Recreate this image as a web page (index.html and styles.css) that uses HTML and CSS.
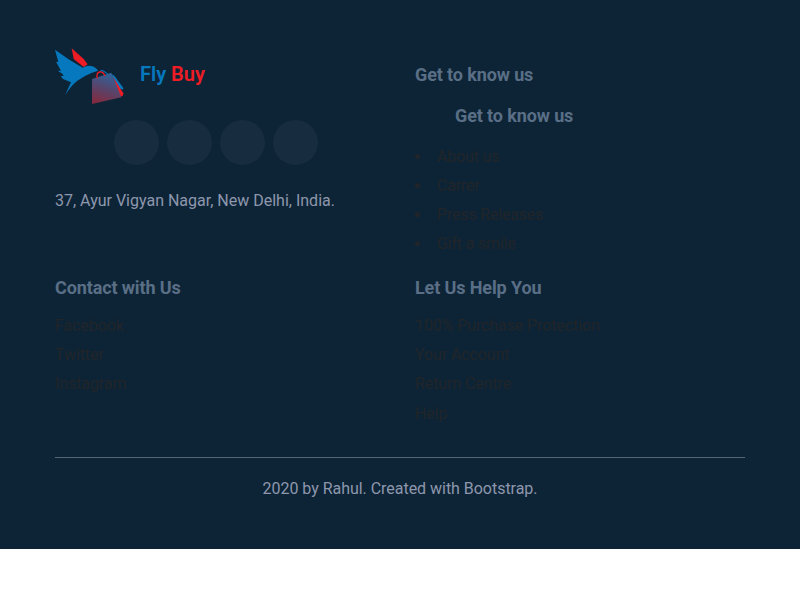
FILE: index.html
```html
<!DOCTYPE html>
<html lang="en">
<head>
<meta charset="utf-8">
<title>Fly Buy</title>
<link rel="stylesheet" href="styles.css">
</head>
<body>
<footer class="footer">
  <div class="columns">
    <section class="about">
      <a class="brand">
        <svg class="logo" viewBox="15 24 210 171">
          <defs>
            <linearGradient id="bag" x1="0.65" y1="0" x2="0.35" y2="1">
              <stop offset="0" stop-color="#2a67a0"/>
              <stop offset="0.5" stop-color="#55466e"/>
              <stop offset="1" stop-color="#822b40"/>
            </linearGradient>
          </defs>
          <path fill="#ee1c25" d="M65 25 L101 57 L113 73 L101 81 L71 57 Z"/>
          <path fill="#0678be" d="M15 29 L58 59 L98 83 Q110 76 123 78 Q136 80 144 92 L126 98 Q103 107 82 122 Q61 139 46 165 Q54 145 63 127 L39 117 L32 108 L41 108 L37 101 L23 92 L33 92 L18 65 L25 66 Z"/>
          <path fill="#0678be" d="M184 102 L193 107 L220 144 L219 149 L206 144 Z"/>
          <path fill="#ee1c25" d="M187 107 L220 160 L218 168 L209 170 Z"/>
          <path fill="none" stroke="#0678be" stroke-width="3.5" d="M151 96 Q153 89 160 93 Q170 99 174 104"/>
          <path fill="url(#bag)" d="M126 117 L184 98 L214 172 L126 192 Z"/>
          <path fill="none" stroke="#ee1c25" stroke-width="4" d="M142 115 Q138 98 149 96 Q159 94 165 108"/>
        </svg>
        <span class="name"><span class="fly">Fly</span> <span class="buy">Buy</span></span>
      </a>
      <div class="social"><a></a><a></a><a></a><a></a></div>
      <p class="address">37, Ayur Vigyan Nagar, New Delhi, India.</p>
    </section>
    <section class="know">
      <h4>Get to know us</h4>
      <h4 class="indent">Get to know us</h4>
      <ul class="links bullets">
        <li>About us</li>
        <li>Carrer</li>
        <li>Press Releases</li>
        <li>Gift a smile</li>
      </ul>
    </section>
    <section>
      <h4>Contact with Us</h4>
      <ul class="links">
        <li>Facebook</li>
        <li>Twitter</li>
        <li>Instagram</li>
      </ul>
    </section>
    <section>
      <h4>Let Us Help You</h4>
      <ul class="links">
        <li>100% Purchase Protection</li>
        <li>Your Account</li>
        <li>Return Centre</li>
        <li>Help</li>
      </ul>
    </section>
  </div>
  <p class="copyright">2020 by Rahul. Created with Bootstrap.</p>
</footer>
</body>
</html>
```
FILE: styles.css
```css
* { box-sizing: border-box; }
body {
  margin: 0;
  background: #fff;
  font: 400 16px/24px Roboto, sans-serif;
  color: #212529;
}
.footer {
  height: 549px;
  padding: 48px 55px 0;
  background: #0d2436;
}
.columns {
  display: grid;
  grid-template-columns: 330px 330px;
  column-gap: 30px;
  grid-template-rows: 228px 181px;
}
.brand {
  display: flex;
  height: 57px;
}
.logo {
  width: 70px;
  height: 57px;
}
.name {
  margin: 14px 0 0 15px;
  font-size: 20px;
  font-weight: 600;
}
.fly { color: #0678be; }
.buy { color: #ee1c25; }
.social {
  display: flex;
  gap: 8px;
  margin: 15px 0 0 59px;
}
.social a {
  width: 45px;
  height: 45px;
  border-radius: 50%;
  background: #182c3f;
}
.address {
  margin: 24px 0 0;
  color: #8d97ad;
}
.know { padding-top: 15px; }
h4 {
  margin: 0;
  font-size: 18px;
  line-height: 24px;
  font-weight: 700;
  letter-spacing: -0.12px;
  color: #5a6f86;
}
.indent { margin: 17px 0 0 40px; }
.links {
  margin: 14px 0 0;
  padding: 0;
  list-style: none;
  letter-spacing: -0.1px;
}
.links li { height: 29.2px; }
.bullets {
  margin-top: 17px;
  list-style: disc inside;
  letter-spacing: -0.18px;
}
.bullets li { height: 29px; }
.copyright {
  margin: 0;
  padding-top: 19px;
  border-top: 1px solid #566773;
  text-align: center;
  letter-spacing: -0.03px;
  color: #8d97ad;
}
```
